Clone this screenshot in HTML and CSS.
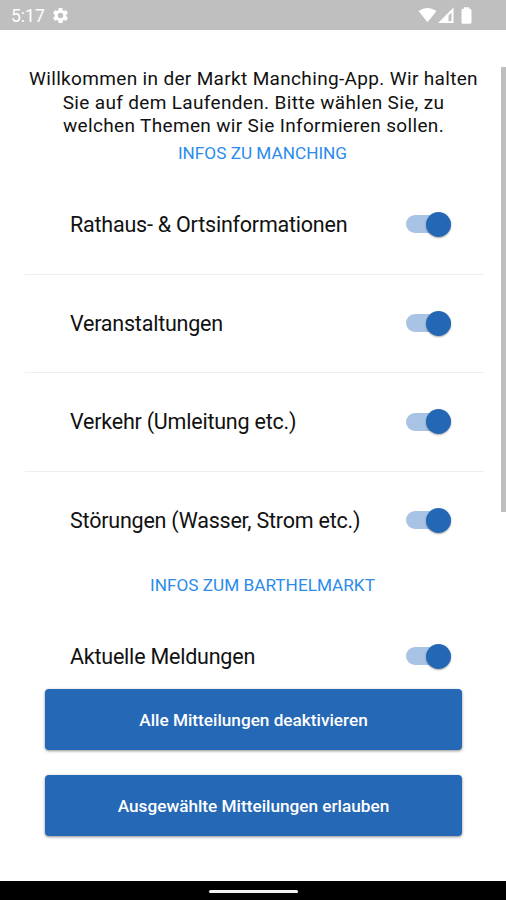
FILE: index.html
```html
<!DOCTYPE html>
<html lang="de">
<head>
  <meta charset="UTF-8" />
  <meta name="viewport" content="width=device-width, initial-scale=1" />
  <title>Markt Manching</title>
  <link rel="stylesheet" href="styles.css">
</head>
<body>
  <header class="statusbar">
    <span class="time">5:17</span>
    <svg class="gear" viewBox="0 0 24 24" width="19" height="19">
      <path fill="#fff" d="M19.14 12.94c.04-.3.06-.61.06-.94 0-.32-.02-.64-.07-.94l2.03-1.58c.18-.14.23-.41.12-.61l-1.92-3.32c-.12-.22-.37-.29-.59-.22l-2.39.96c-.5-.38-1.03-.7-1.62-.94l-.36-2.54c-.04-.24-.24-.41-.48-.41h-3.84c-.24 0-.43.17-.47.41l-.36 2.54c-.59.24-1.13.57-1.62.94l-2.39-.96c-.22-.08-.47 0-.59.22L2.74 8.87c-.12.21-.08.47.12.61l2.03 1.58c-.05.3-.09.63-.09.94s.02.64.07.94l-2.03 1.58c-.18.14-.23.41-.12.61l1.92 3.32c.12.22.37.29.59.22l2.39-.96c.5.38 1.03.7 1.62.94l.36 2.54c.05.24.24.41.48.41h3.84c.24 0 .44-.17.47-.41l.36-2.54c.59-.24 1.13-.56 1.62-.94l2.39.96c.22.08.47 0 .59-.22l1.92-3.32c.12-.22.07-.47-.12-.61l-2.01-1.58zM12 15.6c-1.98 0-3.6-1.62-3.6-3.6s1.62-3.6 3.6-3.6 3.6 1.62 3.6 3.6-1.62 3.6-3.6 3.6z"/>
    </svg>
    <svg class="signals" viewBox="0 0 56 18" width="56" height="18">
      <path fill="#fff" d="M.5 4Q9.500-2 18.500 4L9.500 15.300z"/>
      <path fill="#fff" fill-rule="evenodd" d="M35.500.5V16H20zM33.500 5.500L30.500 8.500V14.300H33.500z"/>
      <path fill="#fff" d="M46 1.700V.3h5v1.400h1q1.500 0 1.500 1.500v12q0 1.500-1.500 1.500h-7q-1.500 0-1.500-1.500v-12q0-1.500 1.500-1.500z"/>
    </svg>
  </header>

  <main>
    <p class="intro">Willkommen in der Markt Manching-App. Wir halten<br>Sie auf dem Laufenden. Bitte wählen Sie, zu<br>welchen Themen wir Sie Informieren sollen.</p>

    <section class="topics">
      <h2>INFOS ZU MANCHING</h2>
      <label class="topic"><span>Rathaus- &amp; Ortsinformationen</span><input type="checkbox" class="switch" checked></label>
      <label class="topic"><span>Veranstaltungen</span><input type="checkbox" class="switch" checked></label>
      <label class="topic"><span>Verkehr (Umleitung etc.)</span><input type="checkbox" class="switch" checked></label>
      <label class="topic"><span>Störungen (Wasser, Strom etc.)</span><input type="checkbox" class="switch" checked></label>
    </section>

    <section class="topics">
      <h2>INFOS ZUM BARTHELMARKT</h2>
      <label class="topic"><span>Aktuelle Meldungen</span><input type="checkbox" class="switch" checked></label>
    </section>
    <div class="scrollbar"></div>
  </main>

  <div class="actions">
    <button type="button">Alle Mitteilungen deaktivieren</button>
    <button type="button">Ausgewählte Mitteilungen erlauben</button>
  </div>

  <footer class="navbar"><div class="handle"></div></footer>
</body>
</html>
```

FILE: styles.css
```css
* {
  box-sizing: border-box;
}

body {
  margin: 0;
  height: 900px;
  display: flex;
  flex-direction: column;
  overflow: hidden;
  background: #fff;
  color: #111;
  font-family: Roboto, sans-serif;
}

.statusbar {
  height: 30px;
  flex: none;
  display: flex;
  align-items: center;
  padding: 1px 32px 0 11px;
  background: #bfbfbf;
  color: #fff;
}

.time {
  width: 40px;
  font-size: 17.5px;
}

.signals {
  margin-left: auto;
}

main {
  position: relative;
  height: 659px;
  flex: none;
  overflow: hidden;
  padding: 37px 22px 0 25px;
}

.intro {
  margin: 0 2px 0 0;
  font-size: 19px;
  line-height: 23.7px;
  letter-spacing: 0.34px;
  text-align: center;
  white-space: nowrap;
}

.topics h2 {
  height: 38px;
  margin: 0 0 0 16px;
  padding-top: 4px;
  color: #2b8ceb;
  font-size: 17.2px;
  font-weight: 400;
  line-height: 24px;
  text-align: center;
}

.intro + .topics h2 {
  height: 37px;
  padding-top: 3px;
}

.topic {
  height: 98.5px;
  display: flex;
  align-items: center;
  justify-content: space-between;
  padding: 0 33px 0 45px;
  font-size: 21.5px;
  letter-spacing: -0.22px;
}

.topic + .topic {
  border-top: 1px solid #eee;
}

.switch {
  appearance: none;
  width: 45px;
  height: 18px;
  margin: 0;
  display: flex;
  align-items: center;
  justify-content: flex-end;
  border-radius: 9px;
  background: #a8c3e3;
}

.switch::after {
  content: "";
  width: 25px;
  height: 25px;
  flex: none;
  border-radius: 50%;
  background: #2468b5;
  box-shadow: 0 1px 2px rgba(0, 0, 0, 0.35);
}

.scrollbar {
  position: absolute;
  top: 37px;
  right: 0;
  width: 5px;
  height: 445px;
  background: #bebebe;
}

.actions {
  flex: 1;
  display: flex;
  flex-direction: column;
  gap: 25px;
  padding: 0 44px 0 45px;
}

button {
  height: 61px;
  padding: 0;
  border: none;
  border-radius: 4px;
  background: #2568b5;
  box-shadow: 0 1px 3px rgba(0, 0, 0, 0.45);
  color: #fff;
  font-family: inherit;
  font-size: 17.2px;
  font-weight: 500;
}

.navbar {
  height: 19px;
  flex: none;
  display: flex;
  justify-content: center;
  background: #000;
}

.handle {
  width: 89px;
  height: 3px;
  margin-top: 9px;
  border-radius: 2px;
  background: #f2f2f2;
}
```
